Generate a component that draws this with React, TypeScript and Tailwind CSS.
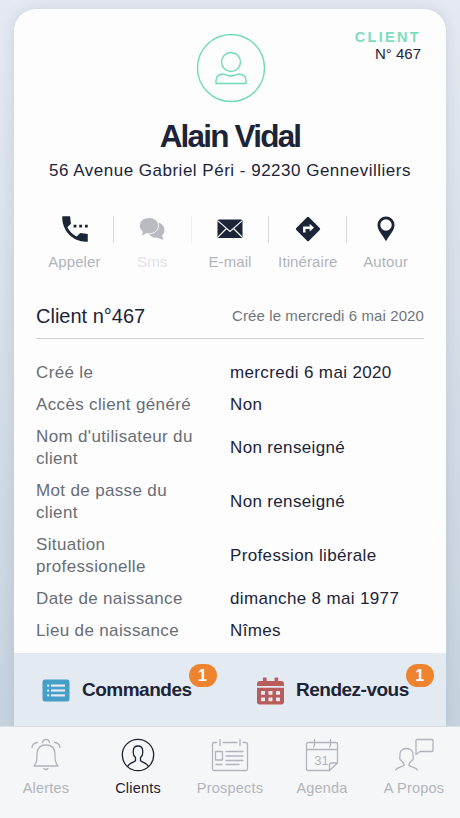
import type { ReactNode } from "react"

const details = [
  { label: "Créé le", value: "mercredi 6 mai 2020" },
  { label: "Accès client généré", value: "Non" },
  { label: "Nom d'utilisateur du client", value: "Non renseigné" },
  { label: "Mot de passe du client", value: "Non renseigné" },
  { label: "Situation professionelle", value: "Profession libérale" },
  { label: "Date de naissance", value: "dimanche 8 mai 1977" },
  { label: "Lieu de naissance", value: "Nîmes" },
]

function PhoneIcon() {
  return (
    <svg className="ml-[2px]" width="34" height="34" viewBox="0 0 24 24" fill="currentColor">
      <path d="M21 15.460l-5.270-.61-2.520 2.520a15.045 15.045 0 0 1-6.590-6.590l2.530-2.530L8.540 3H3.030C2.450 13.180 10.820 21.550 21 20.970v-5.510z" />
      <path d="M11 9h2v2h-2zM15 9h2v2h-2zM19 9h2v2h-2z" />
    </svg>
  )
}

function ChatIcon() {
  return (
    <svg width="26" height="24" viewBox="0 0 26 24" fill="currentColor">
      <path d="M9.500 16.500C11.500 19.800 15 21.300 19 20.700C20.500 21.700 22.500 22.500 24.500 22.500C23.800 21.500 23.300 20 23.200 18.500C24.700 17 25.500 15.300 25.500 13C25.500 9 22.500 6 18.500 5.500L10 8Z" />
      <path
        d="M10 .6C4.500 .6 .4 4 .4 8.500C.4 11 1.600 13.100 3.500 14.700C3.400 16.300 2.700 17.700 1.700 18.800C4 18.600 5.800 17.900 7.300 16.500C8.200 16.700 9.100 16.800 10 16.800C15.300 16.800 19.500 13.200 19.500 8.600S15.300 .6 10 .6z"
        stroke="#fdfdfe"
        strokeWidth="0.900"
      />
    </svg>
  )
}

function MailIcon() {
  return (
    <svg width="26" height="20" viewBox="0 0 26 20">
      <rect x="0.500" y="0.500" width="25" height="18.500" rx="1.500" fill="currentColor" />
      <path d="M1 1.800L13 12.500L25 1.800M1 18L9.500 9.500M25 18L16.500 9.500" fill="none" stroke="white" strokeWidth="1.100" />
    </svg>
  )
}

function RouteIcon() {
  return (
    <svg width="26" height="26" viewBox="0 0 26 26">
      <path d="M12 1.300Q13 .3 14 1.300L24.700 12Q25.700 13 24.700 14L14 24.700Q13 25.700 12 24.700L1.300 14Q.3 13 1.300 12z" fill="currentColor" />
      <path d="M9.300 16.500V11.700H15.500" fill="none" stroke="white" strokeWidth="2.400" />
      <path d="M14.700 7.800L19 11.700L14.700 15.600z" fill="white" />
    </svg>
  )
}

function PinIcon() {
  return (
    <svg width="18" height="26" viewBox="0 0 18 26">
      <path
        d="M9 .5a8.500 8.500 0 0 0-8.500 8.500c0 5.500 5 10 8.500 16.300C12.500 19 17.500 14.500 17.500 9A8.500 8.500 0 0 0 9 .5zM9 3.300a5.700 5.700 0 1 1 0 11.400a5.700 5.700 0 0 1 0-11.400z"
        fill="currentColor"
        fillRule="evenodd"
      />
    </svg>
  )
}

function ListIcon() {
  return (
    <svg width="28" height="23" viewBox="0 0 28 23">
      <rect x="0.500" y="0.500" width="27" height="22" rx="2.500" fill="#469fc6" />
      <g fill="#e4eaf2">
        <rect x="5" y="5.500" width="2.300" height="2.300" rx="1" />
        <rect x="5" y="10.400" width="2.300" height="2.300" rx="1" />
        <rect x="5" y="15.300" width="2.300" height="2.300" rx="1" />
        <rect x="9" y="5.500" width="14" height="2.200" />
        <rect x="9" y="10.400" width="14" height="2.200" />
        <rect x="9" y="15.300" width="14" height="2.200" />
      </g>
    </svg>
  )
}

function CalendarIcon() {
  return (
    <svg width="27" height="28" viewBox="0 0 27 28">
      <path
        d="M6.500.5h2.500q.6 0 .6.600V4h8V1.100q0-.6.6-.6h2.400q.6 0 .6.600V4H24q3 0 3 3v2H0V7q0-3 3-3h2.900V1.100q0-.6.600-.6zM0 10.800h27v14q0 2.700-2.700 2.700H2.700Q0 27.500 0 24.800z"
        fill="#b95c5c"
      />
      <g fill="#e4eaf2">
        <rect x="4" y="14" width="4" height="3.700" rx=".4" />
        <rect x="11.500" y="14" width="4" height="3.700" rx=".4" />
        <rect x="19" y="14" width="4" height="3.700" rx=".4" />
        <rect x="4" y="20.500" width="4" height="3.700" rx=".4" />
        <rect x="11.500" y="20.500" width="4" height="3.700" rx=".4" />
        <rect x="19" y="20.500" width="4" height="3.700" rx=".4" />
      </g>
    </svg>
  )
}

function LineIcon({ width = 34, children }: { width?: number; children: ReactNode }) {
  return (
    <svg
      width={width}
      height="34"
      viewBox={`0 0 ${width} 34`}
      fill="none"
      stroke="currentColor"
      strokeWidth="1.300"
      strokeLinecap="round"
      strokeLinejoin="round"
    >
      {children}
    </svg>
  )
}

function Action({ label, icon, muted }: { label: string; icon: ReactNode; muted?: boolean }) {
  return (
    <div className="flex flex-1 flex-col items-center">
      <div className={muted ? "flex h-[26px] items-center text-[#b9bbc0]" : "flex h-[26px] items-center text-[#1c2438]"}>
        {icon}
      </div>
      <span
        className={
          muted
            ? "mt-[11px] text-[15px] leading-[18px] tracking-[0.100px] text-[#e0e2e5]"
            : "mt-[11px] text-[15px] leading-[18px] tracking-[0.100px] whitespace-nowrap text-[#afb4bb]"
        }
      >
        {label}
      </span>
    </div>
  )
}

function Shortcut({ label, icon }: { label: string; icon: ReactNode }) {
  return (
    <div className="relative flex items-center">
      {icon}
      <span className="ml-[12px] text-[19px] font-bold tracking-[-0.500px] text-[#1c2438]">{label}</span>
      <span className="absolute -top-[12px] -right-[25px] flex h-[23px] w-[28px] items-center justify-center rounded-full bg-[#ee842f] text-[16px] font-bold text-white">
        1
      </span>
    </div>
  )
}

function Tab({ label, icon, active }: { label: string; icon: ReactNode; active?: boolean }) {
  return (
    <div className={active ? "flex w-[92px] flex-col items-center text-[#1c2233]" : "flex w-[92px] flex-col items-center text-[#b0b5bd]"}>
      {icon}
      <span className="mt-[7px] text-[14.500px] leading-[18px] tracking-[0.200px] whitespace-nowrap">{label}</span>
    </div>
  )
}

export default function App() {
  return (
    <div className="flex h-[818px] w-[460px] flex-col overflow-hidden bg-linear-to-b from-[#e5e9f2] via-[#d3dce6] to-[#c2d0dc] font-['Liberation_Sans',Arial,sans-serif] text-[#1c2438]">
      <main className="mx-[14px] mt-[9px] flex h-[717px] flex-col overflow-hidden rounded-t-[22px] bg-[#fdfdfe] shadow-[0_0_14px_rgba(70,90,120,0.150)]">
        <header className="relative flex flex-col items-center pt-[24px]">
          <div className="absolute top-[20px] right-[25px] text-right">
            <p className="text-[14.500px] leading-[16px] font-bold tracking-[2.300px] text-[#7fdcbd]">CLIENT</p>
            <p className="text-[15px] leading-[18px]">N° 467</p>
          </div>
          <svg className="ml-[2px]" width="70" height="70" viewBox="0 0 70 70" fill="none" stroke="#6fd9b8" strokeWidth="1.400">
            <circle cx="35" cy="35" r="33.500" />
            <circle cx="35" cy="29" r="9.500" />
            <path d="M20 50.500V47.500C20 43 23.500 41 27.500 41.300C30.500 41.500 31.500 43 35 43C38.500 43 39.500 41.500 42.500 41.300C46.500 41 50 43 50 47.500V50.500Z" strokeLinejoin="round" />
          </svg>
          <h1 className="mt-[14px] text-[31.500px] leading-[38px] font-bold tracking-[-1.800px]">Alain Vidal</h1>
          <p className="mt-[5px] text-[17px] leading-[22px] tracking-[0.500px] whitespace-nowrap">56 Avenue Gabriel Péri - 92230 Gennevilliers</p>
        </header>

        <div className="mx-[22px] mt-[34px] flex">
          <Action label="Appeler" icon={<PhoneIcon />} />
          <div className="h-[27px] w-px bg-[#d8dadd]" />
          <Action label="Sms" icon={<ChatIcon />} muted />
          <div className="h-[27px] w-px bg-[#eff0f2]" />
          <Action label="E-mail" icon={<MailIcon />} />
          <div className="h-[27px] w-px bg-[#d8dadd]" />
          <Action label="Itinéraire" icon={<RouteIcon />} />
          <div className="h-[27px] w-px bg-[#d8dadd]" />
          <Action label="Autour" icon={<PinIcon />} />
        </div>

        <section className="mx-[22px] mt-[32px]">
          <div className="flex h-[36px] justify-between border-b border-[#cfd1d4]">
            <h2 className="text-[20px] leading-[27px]">Client n°467</h2>
            <span className="text-[15px] leading-[26px] tracking-[0.100px] text-[#70757c]">Crée le mercredi 6 mai 2020</span>
          </div>
          <dl className="mt-[18px]">
            {details.map((row) => (
              <div key={row.label} className="flex items-center py-[5px] text-[17px] leading-[22px] tracking-[0.350px]">
                <dt className="w-[194px] pr-[20px] text-[#686d74]">{row.label}</dt>
                <dd className="whitespace-nowrap">{row.value}</dd>
              </div>
            ))}
          </dl>
        </section>

        <div className="mt-auto flex h-[73px] shrink-0 items-center bg-[#e4eaf2] pt-[2px] pl-[28px]">
          <div className="w-[215px]">
            <div className="flex">
              <Shortcut label="Commandes" icon={<ListIcon />} />
            </div>
          </div>
          <Shortcut label="Rendez-vous" icon={<CalendarIcon />} />
        </div>
      </main>

      <nav className="relative flex flex-1 border-t border-[#dadde1] bg-[#f5f6f7] pt-[11px]">
        <Tab
          label="Alertes"
          icon={
            <LineIcon>
              <path d="M5 28C8 24 8 22 8 16C8 10 11.500 7 17 7S26 10 26 16C26 22 26 24 29 28ZM15 30.500Q17 32.500 19 30.500M13.500 4.500Q14 1.500 17 1.500T20.500 4.500M3 9.500Q3.500 5 8.500 4.500M31 9.500Q30.500 5 25.500 4.500" />
            </LineIcon>
          }
        />
        <Tab
          label="Clients"
          active
          icon={
            <LineIcon>
              <circle cx="17" cy="17" r="15.700" />
              <path d="M6.500 28.500C8 25 12.500 24.500 14.500 22.800V19.500C12.500 18 12 15.500 12.300 13C12.300 9.500 14 8 17 8S21.700 9.500 21.700 13C22 15.500 21.500 18 19.500 19.500V22.800C21.500 24.500 26 25 27.500 28.500" />
            </LineIcon>
          }
        />
        <Tab
          label="Prospects"
          icon={
            <LineIcon width={38}>
              <path d="M5.500 4.500H3Q1.500 4.500 1.500 6V31Q1.500 32.500 3 32.500H35Q36.500 32.500 36.500 31V6Q36.500 4.500 35 4.500H32M12 4.500H26M9 1.500V7.500M29 1.500V7.500M4.500 13.500H11.500V22H4.500ZM15 13.500H32M15 18H32M15 22.500H32M5 26.500H11M15 26.500H28" />
            </LineIcon>
          }
        />
        <Tab
          label="Agenda"
          icon={
            <LineIcon>
              <path d="M24 32.500H3Q1.500 32.500 1.500 31V6Q1.500 4.500 3 4.500H31Q32.500 4.500 32.500 6V25L24.500 32.500V27Q24.500 25 26.500 25H32.500M1.500 11.500H32.500M9.500 1.500V7.500L8.500 9M25.500 1.500V7.500L24.500 9" />
              <text x="16.500" y="27" textAnchor="middle" fontSize="13" fill="currentColor" stroke="none">
                31
              </text>
            </LineIcon>
          }
        />
        <Tab
          label="A Propos"
          icon={
            <LineIcon width={40}>
              <path d="M1.500 32C3 29.500 8 29 10 27.500C10.500 25.500 9 25 7.500 22.500C5.500 22 5.500 20 6 18C5.500 13 8 10.500 12.500 10.500S19.500 13 19 18C19.500 20 19.500 22 17.500 22.500C16 25 14.500 25.500 15 27.500C17 29 22 29.500 23.500 32" />
              <path d="M23 1.500H38Q39 1.500 39 2.500V12.500Q39 13.500 38 13.500H26L22 16.500V2.500Q22 1.500 23 1.500Z" />
            </LineIcon>
          }
        />
      </nav>
    </div>
  )
}
